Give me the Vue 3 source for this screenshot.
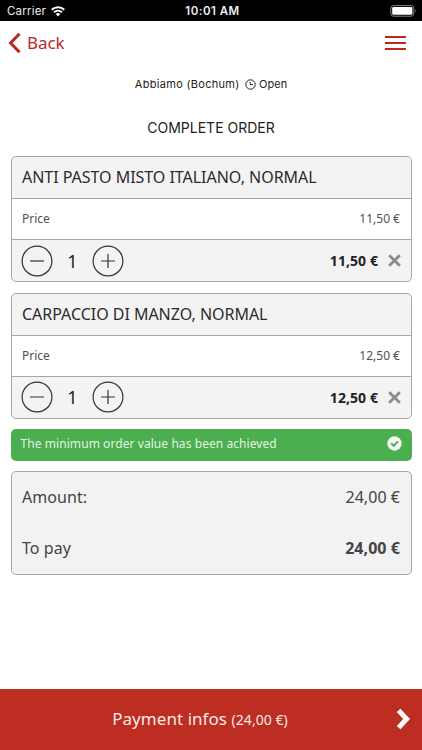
<script setup>
const items = [
  { name: 'ANTI PASTO MISTO ITALIANO, NORMAL', price: '11,50 €', quantity: 1 },
  { name: 'CARPACCIO DI MANZO, NORMAL', price: '12,50 €', quantity: 1 },
]
const total = '24,00 €'
</script>

<template>
  <div class="screen">
    <header class="status">
      <div class="carrier">
        <span class="carrier-name">Carrier</span>
        <svg width="14" height="11" viewBox="0 0 14 11" fill="none" stroke="#fff" stroke-width="1.9">
          <path d="M.7 3.8C4.3.4 9.7.4 13.3 3.8M3 6.3C5.3 4.1 8.7 4.1 11 6.3" />
          <path d="M4.7 8Q7 6 9.3 8L7 10.4Z" fill="#fff" stroke="none" />
        </svg>
      </div>
      <span class="time">10:01 AM</span>
      <svg class="battery" width="28" height="12" viewBox="0 0 28 12">
        <rect x=".8" y=".6" width="23" height="10.6" rx="2.6" fill="none" stroke="#858585" />
        <rect x="2.2" y="2" width="20.2" height="7.8" rx="1.3" fill="#fff" />
        <path d="M25.2 4.2Q26.8 5.9 25.2 7.6Z" fill="#858585" />
      </svg>
    </header>

    <nav class="nav">
      <button class="back">
        <svg width="14" height="22" viewBox="0 0 14 22" fill="none" stroke="#b8291f" stroke-width="3">
          <path d="M11.5 1.8L2.6 11L11.5 20.2" />
        </svg>
        <span class="back-label">Back</span>
      </button>
      <svg width="21" height="16" viewBox="0 0 21 16" fill="#b8291f">
        <path d="M0 1h21v2H0zM0 7h21v2H0zM0 13h21v2H0z" />
      </svg>
    </nav>

    <div class="restaurant">
      <span class="place">Abbiamo (Bochum)</span>
      <svg width="11" height="11" viewBox="0 0 11 11" fill="none" stroke="#222" stroke-width="1">
        <circle cx="5.5" cy="5.5" r="4.7" /><path d="M5.2 3V5.6H8" />
      </svg>
      <span class="open">Open</span>
    </div>

    <h1 class="title"><span>COMPLETE ORDER</span></h1>

    <main class="content">
      <section v-for="item in items" :key="item.name" class="card">
        <h2 class="name"><span>{{ item.name }}</span></h2>
        <div class="price">
          <span>Price</span><span>{{ item.price }}</span>
        </div>
        <div class="actions">
          <svg width="32" height="32" viewBox="0 0 32 32" fill="none" stroke="#333" stroke-width="1.2">
            <circle cx="16" cy="16" r="14.9" /><path d="M9 16h14" />
          </svg>
          <span class="quantity">{{ item.quantity }}</span>
          <svg width="32" height="32" viewBox="0 0 32 32" fill="none" stroke="#333" stroke-width="1.2">
            <circle cx="16" cy="16" r="14.9" /><path d="M9 16h14M16 9v14" />
          </svg>
          <strong class="sum">{{ item.price }}</strong>
          <svg width="13" height="13" viewBox="0 0 13 13" fill="none" stroke="#8b8b8b" stroke-width="2.8">
            <path d="M1.2 1.2L11.8 11.8M11.8 1.2L1.2 11.8" />
          </svg>
        </div>
      </section>

      <div class="notice">
        <span>The minimum order value has been achieved</span>
        <svg width="15" height="15" viewBox="0 0 15 15">
          <circle cx="7.5" cy="7.5" r="7.2" fill="#f2faf2" />
          <path d="M4.2 7.4L6.7 9.8L11 5.4" fill="none" stroke="#4bae4f" stroke-width="2" />
        </svg>
      </div>

      <section class="totals">
        <div class="total-row"><span class="amount">Amount:</span><span>{{ total }}</span></div>
        <div class="total-row"><span>To pay</span><strong>{{ total }}</strong></div>
      </section>
    </main>

    <button class="pay">
      <span class="pay-label">Payment infos <small>({{ total }})</small></span>
      <svg class="chevron" width="15" height="22" viewBox="0 0 15 22" fill="none" stroke="#fff" stroke-width="5">
        <path d="M2.6 2.4L10.6 11L2.6 19.6" />
      </svg>
    </button>
  </div>
</template>

<style>
body { margin: 0; background: #fff; }
</style>

<style scoped>
.screen {
  width: 422px;
  height: 750px;
  display: flex;
  flex-direction: column;
  box-sizing: border-box;
  overflow: hidden;
  background: #fff;
  color: #444;
  font-family: "Noto Sans", sans-serif;
  white-space: nowrap;
}
svg { display: block; flex: none; }
button { border: 0; padding: 0; background: none; font: inherit; }
h1, h2 { margin: 0; font-weight: 400; }
.status {
  height: 21px;
  flex: none;
  box-sizing: border-box;
  display: grid;
  grid-template-columns: 1fr auto 1fr;
  align-items: center;
  padding: 1px 4px 0 7px;
  background: #000;
  color: #eee;
  font: 11.5px/20px Inter, sans-serif;
}
.carrier { display: flex; align-items: center; gap: 5px; }
.carrier-name { letter-spacing: .2px; }
.time { font-weight: 600; letter-spacing: .5px; }
.battery { justify-self: end; }
.nav {
  height: 44px;
  flex: none;
  display: flex;
  align-items: center;
  justify-content: space-between;
  padding: 0 16px 0 8px;
  color: #b8291f;
}
.back { display: flex; align-items: center; gap: 5px; color: inherit; }
.back-label { font-size: 17px; line-height: 24px; letter-spacing: -.05px; }
.restaurant {
  height: 38px;
  flex: none;
  display: flex;
  align-items: center;
  justify-content: center;
  gap: 3px;
  color: #222;
  font: 11px/16px Inter, sans-serif;
}
.place { margin-right: 2.5px; letter-spacing: .3px; }
.title {
  height: 53px;
  flex: none;
  text-align: center;
  color: #222;
  font: 14px/49px Inter, sans-serif;
}
.content { display: flex; flex-direction: column; gap: 10.5px; padding: 0 10.5px; }
.card {
  height: 126px;
  box-sizing: border-box;
  display: grid;
  grid-template-rows: 41px 42px 41px;
  border: 1px solid #aaa6a7;
  border-radius: 5px;
  overflow: hidden;
  background: #f3f3f3;
}
.name { padding-left: 10.5px; color: #2b2b2b; font-size: 16px; line-height: 41px; letter-spacing: -.03px; }
.price {
  box-sizing: border-box;
  display: flex;
  align-items: center;
  justify-content: space-between;
  padding: 0 10.5px 1px;
  border-top: 1px solid #aaa6a7;
  border-bottom: 1px solid #aaa6a7;
  background: #fff;
  color: #505050;
  font-size: 12px;
}
.actions { display: flex; align-items: center; padding: 0 10px 0 9.5px; }
.quantity { width: 39px; text-align: center; color: #222; font-size: 18px; }
.sum { margin: 0 9.5px 0 auto; color: #222; font-size: 14px; letter-spacing: .07px; }
.notice {
  height: 31.5px;
  box-sizing: border-box;
  display: flex;
  align-items: center;
  justify-content: space-between;
  padding: 0 10px 2px;
  border-radius: 5px;
  background: #4bae4f;
  color: #e1f4e1;
  font-size: 12px;
  letter-spacing: .07px;
}
.totals {
  height: 104px;
  box-sizing: border-box;
  display: grid;
  grid-template-rows: 51px 51px;
  border: 1px solid #aaa6a7;
  border-radius: 5px;
  background: #f2f2f2;
  padding: 0 10.5px;
  font-size: 16px;
}
.total-row { display: flex; align-items: center; justify-content: space-between; padding-bottom: 1px; letter-spacing: .05px; }
.pay {
  height: 61.5px;
  flex: none;
  margin-top: auto;
  display: grid;
  grid-template-columns: 1fr auto 1fr;
  align-items: center;
  padding: 0 11px 0 10px;
  background: #bd2d21;
  color: #fceae7;
}
.pay-label { grid-column: 2; margin-left: -21px; font-size: 17px; line-height: 26px; letter-spacing: .05px; }
.pay-label small { font-size: 14px; }
.chevron { justify-self: end; }
</style>
